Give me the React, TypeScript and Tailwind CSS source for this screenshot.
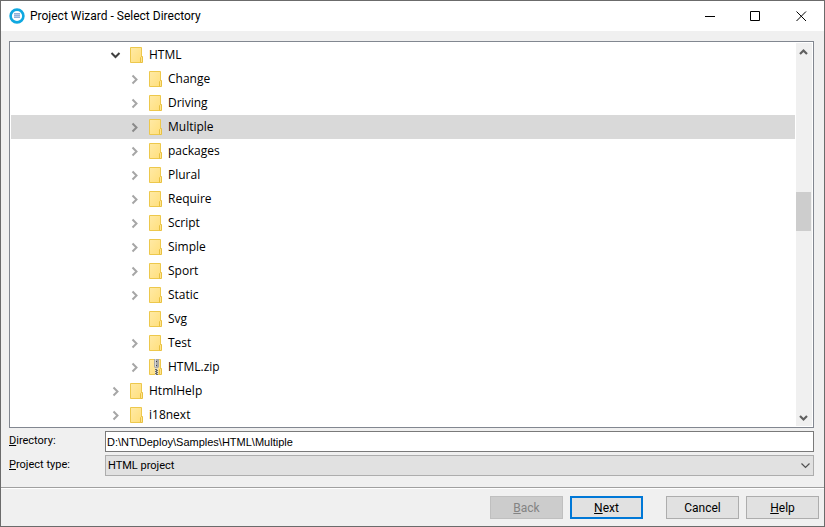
import { useState } from "react"

const treeItems = [
  { name: "HTML", level: 0, state: "open" },
  { name: "Change", level: 1, state: "closed" },
  { name: "Driving", level: 1, state: "closed" },
  { name: "Multiple", level: 1, state: "closed" },
  { name: "packages", level: 1, state: "closed" },
  { name: "Plural", level: 1, state: "closed" },
  { name: "Require", level: 1, state: "closed" },
  { name: "Script", level: 1, state: "closed" },
  { name: "Simple", level: 1, state: "closed" },
  { name: "Sport", level: 1, state: "closed" },
  { name: "Static", level: 1, state: "closed" },
  { name: "Svg", level: 1, state: "leaf" },
  { name: "Test", level: 1, state: "closed" },
  { name: "HTML.zip", level: 1, state: "closed", zip: true },
  { name: "HtmlHelp", level: 0, state: "closed" },
  { name: "i18next", level: 0, state: "closed" },
]

function AppLogo() {
  return (
    <svg width="16" height="16" viewBox="0 0 16 16" aria-hidden="true">
      <circle cx="8" cy="8" r="6.4" fill="#fff" stroke="#0fa8e0" strokeWidth="2.6" />
      <path d="M5 5.5h6M5 7.5h6M5 9.5h6" stroke="#8fb0d8" strokeWidth="1" />
      <path d="M5 6.5h6M5 8.5h6" stroke="#b5cbe6" strokeWidth="1" />
    </svg>
  )
}

function FolderIcon({ zip }: { zip?: boolean }) {
  return (
    <svg width="13" height="16" viewBox="0 0 13 16" className="shrink-0" aria-hidden="true">
      <defs>
        <linearGradient id="folder" x1="0" y1="0" x2="1" y2="1">
          <stop offset="0" stopColor="#ffeaa6" />
          <stop offset="1" stopColor="#ffdf7c" />
        </linearGradient>
      </defs>
      <path d="M.5.5h11v15H.5z" fill="url(#folder)" stroke="#edc84c" />
      <path d="M10.5 15.5v-5l1-1h1v6z" fill="#ffe48f" stroke="#e8c141" />
      {zip && (
        <>
          <path d="M5 0h5v8l-1 1H6L5 8z" fill="#a8a8a8" />
          <path d="M6.5 0v8" stroke="#d6d6d6" />
          <path d="M7 2.5h1M7 6.5h1" stroke="#3c3c3c" />
          <path d="M6 9h3v7H6z" fill="#e0dccb" />
          <path d="M6 10.5h2M7 11.5h2M6 12.5h2M7 13.5h2M6 14.5h2M7 15.5h2" stroke="#6a6a6a" />
        </>
      )}
    </svg>
  )
}

function Expander({ state, selected }: { state: string; selected: boolean }) {
  if (state === "leaf") return <span className="w-4 shrink-0" />
  return (
    <button aria-label={state === "open" ? "Collapse" : "Expand"} className="w-4 h-4 shrink-0">
      <svg width="16" height="16" viewBox="0 0 16 16" fill="none" strokeWidth="2">
        {state === "open" ? (
          <path d="M3.5 6l4 4 4-4" stroke="#404040" />
        ) : (
          <path d="M5.5 4.5l4 4-4 4" stroke={selected ? "#8a8a8a" : "#a6a6a6"} />
        )}
      </svg>
    </button>
  )
}

function ScrollArrow({ up }: { up?: boolean }) {
  return (
    <button aria-label={up ? "Scroll up" : "Scroll down"} className="w-4 h-4 shrink-0">
      <svg width="16" height="16" viewBox="0 0 16 16" fill="none" stroke="#606060" strokeWidth="2.2">
        <path d={up ? "M4 11l3.500-3.500L11 11" : "M4 6l3.500 3.500L11 6"} />
      </svg>
    </button>
  )
}

const dialogButton =
  "w-[73px] h-[23px] border border-[#adadad] bg-[#e1e1e1] flex items-center justify-center"

export default function App() {
  const [selected, setSelected] = useState("Multiple")
  const [directory, setDirectory] = useState("D:\\NT\\Deploy\\Samples\\HTML\\Multiple")

  return (
    <main className="h-screen flex flex-col border border-[#6b6b6b] bg-[#f0f0f0] text-black text-[11px] font-[Roboto,'Liberation_Sans',sans-serif]">
      <header className="h-[30px] shrink-0 bg-white flex items-center pl-2 text-xs">
        <AppLogo />
        <h1 className="ml-[5px] flex-1">Project Wizard - Select Directory</h1>
        <button aria-label="Minimize" className="w-[46px] h-full flex items-center justify-center">
          <svg width="11" height="11" stroke="#000" fill="none">
            <path d="M1 5.5h10" />
          </svg>
        </button>
        <button aria-label="Maximize" className="w-[46px] h-full flex items-center justify-center">
          <svg width="11" height="11" stroke="#000" fill="none">
            <path d="M.5.5h9v9h-9z" />
          </svg>
        </button>
        <button aria-label="Close" className="w-[46px] h-full flex items-center justify-center">
          <svg width="11" height="11" stroke="#000" fill="none">
            <path d="M.5.5l9.500 9.500M10 .5L.5 10" />
          </svg>
        </button>
      </header>

      <div className="flex-1 min-h-0 flex flex-col pt-[10px] pl-2 pr-[10px] pb-[11px]">
        <div className="flex-1 min-h-0 flex border border-[#828790] bg-white pt-px pl-px pr-px">
          <ul role="tree" className="flex-1 overflow-hidden text-xs font-['Open_Sans','Noto_Sans',sans-serif]">
            {treeItems.map((item) => (
              <li
                key={item.name}
                role="treeitem"
                aria-selected={selected === item.name}
                onClick={() => setSelected(item.name)}
                className={`h-6 flex items-center gap-[6px] ${item.level === 0 ? "pl-[97px]" : "pl-[116px]"} ${selected === item.name ? "bg-[#d9d9d9]" : ""}`}
              >
                <Expander state={item.state} selected={selected === item.name} />
                <FolderIcon zip={item.zip} />
                <span>{item.name}</span>
              </li>
            ))}
          </ul>
          <div className="w-4 ml-px mb-px flex flex-col bg-[#f0f0f0]">
            <ScrollArrow up />
            <div className="flex-1 flex flex-col">
              <div className="grow-[133]" />
              <div className="w-[15px] h-[39px] bg-[#cdcdcd]" />
              <div className="grow-[179]" />
            </div>
            <ScrollArrow />
          </div>
        </div>

        <div className="mt-[3px] flex items-center">
          <label htmlFor="directory" className="w-24">
            <u>D</u>irectory:
          </label>
          <input
            id="directory"
            value={directory}
            onChange={(e) => setDirectory(e.target.value)}
            className="flex-1 h-[21px] border border-[#7a7a7a] bg-white px-px outline-none font-['Liberation_Sans',sans-serif]"
          />
        </div>
        <div className="mt-[3px] flex items-center">
          <label htmlFor="project-type" className="w-24">
            <u>P</u>roject type:
          </label>
          <div className="relative flex-1 h-[21px]">
            <select
              id="project-type"
              className="block w-full h-[21px] appearance-none border border-[#adadad] bg-[#e1e1e1] px-[2px] pt-[2px] outline-none"
            >
              <option>HTML project</option>
            </select>
            <svg
              width="9"
              height="6"
              fill="none"
              stroke="#505050"
              strokeWidth="1.2"
              className="absolute right-1 top-2 pointer-events-none"
            >
              <path d="M.5.5l4 4 4-4" />
            </svg>
          </div>
        </div>
      </div>

      <footer className="border-t border-[#a0a0a0]">
        <div className="border-t border-white flex justify-end gap-[7px] pt-[7px] pb-[7px] pr-[5px] text-xs">
          <button disabled className="w-[73px] h-[23px] border border-[#bfbfbf] bg-[#cccccc] text-[#838383] flex items-center justify-center">
            <span><u>B</u>ack</span>
          </button>
          <button className="w-[73px] h-[23px] border-2 border-[#0078d7] bg-[#e1e1e1] flex items-center justify-center">
            <span><u>N</u>ext</span>
          </button>
          <button className={`${dialogButton} ml-4`}>Cancel</button>
          <button className={dialogButton}>
            <span><u>H</u>elp</span>
          </button>
        </div>
      </footer>
    </main>
  )
}
